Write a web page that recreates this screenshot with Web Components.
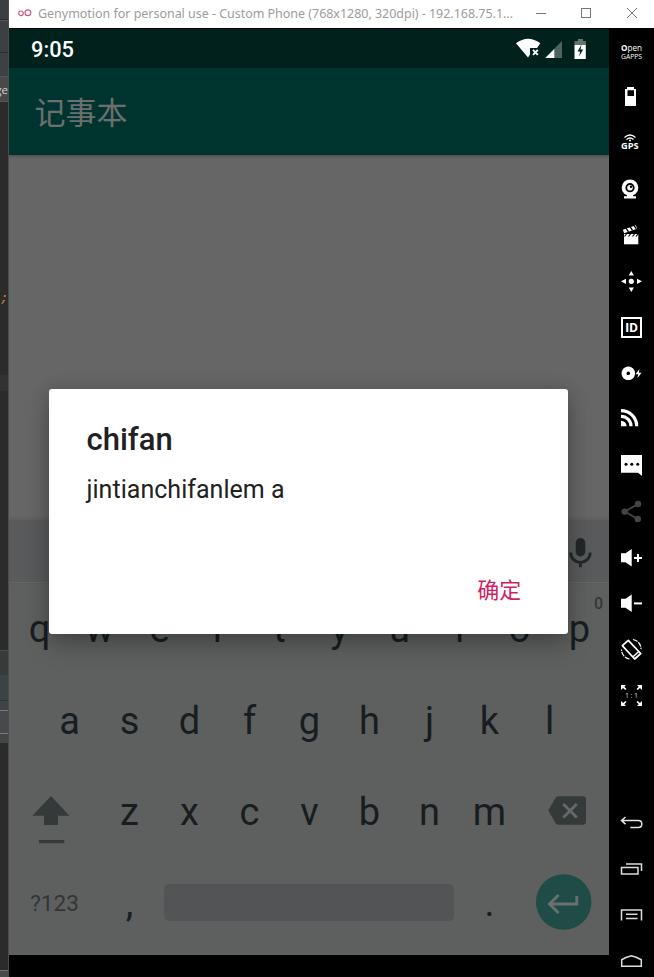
<!DOCTYPE html>
<html lang="zh">
<head>
<meta charset="utf-8">
<title>Genymotion</title>
<style>
html,body{margin:0;height:977px;overflow:hidden;background:#000}
</style>
</head>
<body>
<emulator-window></emulator-window>
<script>
function define(name, html, setup) {
  customElements.define(name, class extends HTMLElement {
    connectedCallback() {
      if (this.shadowRoot) return;
      const t = document.createElement('template');
      t.innerHTML = setup ? setup(this) : html;
      this.attachShadow({mode: 'open'}).append(t.content.cloneNode(true));
    }
  });
}

/* Strip of the code editor that shows behind the window */
define('editor-edge', `
<style>
:host{display:flex;flex-direction:column;box-sizing:border-box;width:9px;height:977px;overflow:hidden;border-right:1px solid #4b4c4d;
font-family:"Open Sans",sans-serif;
background:linear-gradient(#3c3f41 0 19px,#27292a 19px 20px,#55585a 20px 21px,#3c4043 21px 52px,#2e3032 52px 53px,#3e4144 53px 76px,#555 76px 77px,#47494a 77px 101px,#5a5a5a 101px 102px,#2b2b2b 102px 375px,#323232 375px 391px,#2b2b2b 391px 650px,#4a4b4c 650px 651px,#37393b 651px 675px,#3d4247 675px 700px,#303438 700px 701px,#404448 701px 710px,#777a7a 710px 711px,#474a4b 711px 733px,#777a7a 733px 734px,#434648 734px 743px,#2b2b2b 743px 970px,#707070 970px 971px,#47494a 971px)}
.tab{height:24px;margin-top:78px;line-height:24px;font-size:11.500px;color:#d0d0d0;display:flex;justify-content:flex-end}
.code{margin-top:187px;height:20px;font:italic bold 13px/20px "Liberation Mono",monospace;color:#c07832;display:flex;justify-content:flex-end}
</style>
<div class="tab">ge</div><div class="code">;</div>`);

define('title-bar', `
<style>
:host{display:flex;align-items:center;height:29px;box-sizing:border-box;background:#fff;padding:0 0 2px 9px;border-bottom:1px solid #000;font:12.5px "Noto Sans",sans-serif;color:#969696}
.logo{width:16px;height:16px;margin-right:4px;flex:none}
.t{width:476px;white-space:nowrap;flex:none}
.c{width:45px;height:27px;flex:none}
</style>
<svg class="logo" viewBox="0 0 16 16" fill="none" stroke="#d05a86" stroke-width="1.2"><circle cx="3" cy="8.3" r="2.3"/><circle cx="9.9" cy="7.8" r="2.9"/></svg>
<svg class="t" height="20"><text x="0" y="14.5" textLength="475" fill="#9c9c9c">Genymotion for personal use - Custom Phone (768x1280, 320dpi) - 192.168.75.1...</text></svg>
<svg class="c" viewBox="0 0 45 27" stroke="#777" fill="none"><path d="M22 13.5h10"/></svg>
<svg class="c" viewBox="0 0 45 27" stroke="#777" fill="none"><rect x="22.500" y="8.500" width="9" height="9"/></svg>
<svg class="c" viewBox="0 0 45 27" stroke="#777" fill="none"><path d="M23 8l10 10M33 8L23 18"/></svg>`);

define('status-bar', `
<style>
:host{display:flex;align-items:center;height:39px;box-sizing:border-box;background:#00211c;padding:2px 0 0 22px;color:#fff;font:500 21.800px/38px Roboto,sans-serif}
.time{flex:1}
svg{width:102px;height:38px}
</style>
<div class="time">9:05</div>
<svg viewBox="507 31 102 38" fill="#fff">
<path d="M516 43.200Q528 34.200 540.300 43.200L537 48H530V54.600L528 57.500Z"/>
<path d="M533 49.800l4.800 5M537.800 49.800l-4.800 5" stroke="#fff" stroke-width="1.900"/>
<path d="M562 41v17h-17z" fill="#4d6460"/><path d="M554.300 49v9h-9z"/>
<path d="M574.500 45v-4h3.500v-2h5v2h3v4z" fill="#60736f"/><path d="M574.500 45h11.300v14h-11.300z"/>
<path d="M581.500 44.500l-4 7h2.600l-1 5 4-7h-2.600z" fill="#00211c"/>
</svg>`);

define('app-bar', `
<style>
:host{display:flex;align-items:center;height:87px;box-sizing:border-box;padding:0 0 1px 25.500px;background:#00352f;color:#6b6f6e;font:31px/1.4 "Noto Sans CJK SC",sans-serif;box-shadow:0 1px 3px rgba(0,0,0,.3);position:relative}
</style><slot></slot>`);

define('key-cap', '', el => `
<style>
:host{display:flex;align-items:center;justify-content:center;width:60px;height:100%;box-sizing:border-box;padding:1.500px 0 0 1px;flex:none;font:38px/1 Roboto,sans-serif;color:#171d21;position:relative}
:host([small]){font-size:22.500px;color:#323637;width:90px}
.hint{position:absolute;top:11px;right:6px;font:500 16px/19px Roboto,sans-serif;color:#333738}
</style><slot></slot>${el.getAttribute('hint') ? `<span class="hint">${el.getAttribute('hint')}</span>` : ''}`);

define('soft-keyboard', '', () => {
  const keys = s => [...s].map(c => `<key-cap${c === 'p' ? ' hint="0"' : ''}>${c}</key-cap>`).join('');
  return `
<style>
:host{display:block;height:435px;background:#5e605f}
.suggest{height:63px;box-sizing:border-box;background:#595a5c;border-bottom:1px solid #646666;display:flex;justify-content:flex-end;box-shadow:0 -1px 3px rgba(80,80,85,.5)}
.row{height:91.300px;display:flex;justify-content:center;align-items:center}
svg{flex:none;display:block}
.space{width:290px;height:37px;border-radius:5px;background:#535456;margin:0 5px}
</style>
<div class="suggest"><svg width="57" height="62" viewBox="552 520 57 62"><rect x="575.700" y="538" width="9.600" height="18.500" rx="4.800" fill="#222829"/><path d="M570.600 552.500a9.800 9.800 0 0 0 19.600 0M580.400 562v5.300" fill="none" stroke="#222829" stroke-width="2.800"/></svg></div>
<div class="row">${keys('qwertyuiop')}</div>
<div class="row">${keys('asdfghjkl')}</div>
<div class="row">
<svg width="90" height="91" viewBox="9 766 90 91"><path d="M51 796l18.500 19.700H58V825H44v-9.300H32.300z" fill="#343a3a"/><path d="M39 841.600h25.300" stroke="#343a3a" stroke-width="3.200"/></svg>
${keys('zxcvbnm')}
<svg width="90" height="91" viewBox="519 766 90 91"><path d="M558 796.300h25q3 0 3 3v22.500q0 3-3 3h-25q-1.500 0-2.500-1.500l-7.200-12.700 7.200-12.800q1-1.500 2.500-1.500z" fill="#343a3a"/><path d="M563.300 804l13.500 13.500M576.800 804l-13.500 13.500" stroke="#666968" stroke-width="2.800"/></svg>
</div>
<div class="row">
<key-cap small>?123</key-cap><key-cap>,</key-cap><div class="space"></div><key-cap>.</key-cap>
<svg width="90" height="91" viewBox="519 857 90 91"><circle cx="563.700" cy="902" r="27.800" fill="#1f4c46"/><path d="M576.800 896v8H550M558.500 895l-9 9 9 9" fill="none" stroke="#69706e" stroke-width="2.900"/></svg>
</div>`;
});

define('alert-dialog', `
<style>
:host{display:flex;flex-direction:column;box-sizing:border-box;position:absolute;left:40px;top:359.500px;width:519.300px;height:245px;border-radius:3px;background:#fff;padding:33.500px 47px 28.500px 37.500px;font-family:Roboto,sans-serif;color:#212121;box-shadow:0 12px 24px rgba(0,0,0,.22),0 0 18px rgba(0,0,0,.16)}
h2{margin:0;font:500 31px/36px Roboto,sans-serif}
p{margin:17px 0 0;font-size:25px;line-height:30px;letter-spacing:.03px}
.act{margin-top:auto;align-self:flex-end;color:#d01f64;font:22px/34px "Noto Sans CJK SC",sans-serif}
</style>
<h2><slot name="title"></slot></h2><p><slot></slot></p><div class="act"><slot name="action"></slot></div>`);

define('phone-screen', `
<style>
:host{display:flex;flex-direction:column;position:relative;width:600px;height:948px;background:#000;overflow:hidden}
.body{height:365px;background:#666}
</style>
<status-bar></status-bar><app-bar>记事本</app-bar><div class="body"></div><soft-keyboard></soft-keyboard>
<alert-dialog><span slot="title">chifan</span>jintianchifanlem a<span slot="action">确定</span></alert-dialog>`);

const icons = {
  gapps: '<text x="12" y="22.500" font-size="8.500" textLength="21" lengthAdjust="spacingAndGlyphs"><tspan font-weight="700">O</tspan>pen</text><text x="12" y="30.500" font-size="6.500" textLength="21" lengthAdjust="spacingAndGlyphs">GAPPS</text>',
  battery: '<path fill-rule="evenodd" d="M18 13h7v2h2v17H16V15h2zM18.500 16.300v5.700H25v-5.700z"/>',
  gps: '<path d="M15.500 17.500q5.500-5 11 0M17.500 19.500q3.500-3 7 0" fill="none" stroke="#fff" stroke-width="1.300"/><circle cx="21" cy="20.500" r="1"/><text x="12" y="29.300" font-size="8" font-weight="700" textLength="17.500" lengthAdjust="spacingAndGlyphs">GPS</text>',
  camera: '<circle cx="21" cy="21.700" r="8.300"/><path d="M18 29h6v1.200h3V32.500H15v-2.300h3z"/><circle cx="21" cy="21.700" r="3.700" fill="none" stroke="#000" stroke-width="1.800"/><circle cx="22" cy="20.800" r="1.200" fill="#000"/>',
  clap: '<path d="M15 22h14.300v10.300H15z"/><path d="M14.500 19.500L27.500 15" stroke="#fff" stroke-width="3.500"/><path d="M17 16.200l2.500 3.600M21 14.700l2.500 3.600M25 13.400l2.300 3.400" stroke="#000" stroke-width="1.300"/><path d="M15.500 24.500l2-2.500M19.500 24.500l2-2.500M23.500 24.500l2-2.500M27 24.500l2-2.500" stroke="#000" stroke-width="1.200"/>',
  move: '<circle cx="22.300" cy="23.300" r="2.600"/><path d="M22.300 13l2.600 4.500h-5.200zM22.300 34l2.600-4.500h-5.200zM12 23.300l5-2.600v5.200zM33 23.300l-5-2.600v5.200z"/>',
  id: '<rect x="13" y="14" width="19" height="19" fill="none" stroke="#fff" stroke-width="2"/><text x="16.300" y="28.200" font-size="13" font-weight="700" textLength="12.500" lengthAdjust="spacingAndGlyphs" font-family="Roboto">ID</text>',
  disc: '<path fill-rule="evenodd" d="M19.300 16.500a6.800 6.800 0 1 0 .01 0zM19.300 21.500a1.800 1.800 0 1 1-.01 0z"/><path d="M30.500 19l-4 5.200h2.800l-1 4 4.300-5.500h-2.800z"/>',
  rss: '<path d="M12 14.600A15.700 15.700 0 0 1 27.700 30.300M12 20.300a10 10 0 0 1 10 10" fill="none" stroke="#fff" stroke-width="3.200"/><path d="M12 24.700a5.600 5.600 0 0 1 5.600 5.600H12z"/>',
  chat: '<path d="M12 13h21v21l-4-3.300H12z"/><g fill="#000"><circle cx="17" cy="22.300" r="1.500"/><circle cx="22.800" cy="22.300" r="1.500"/><circle cx="28.700" cy="22.300" r="1.500"/></g>',
  share: '<g fill="#454545"><circle cx="29" cy="16" r="3.200"/><circle cx="15.700" cy="23.600" r="3.200"/><circle cx="28.800" cy="31" r="3.200"/></g><path d="M29 16l-13.300 7.600L28.800 31" fill="none" stroke="#454545" stroke-width="1.800"/>',
  volup: '<path d="M12 19.300h4.500l6.200-4.300v17.500l-6.200-4.300H12z"/><path d="M25 24h8M29 20v8" stroke="#fff" stroke-width="2"/>',
  voldown: '<path d="M12 18.800h4.500l6.200-4.300V32l-6.200-4.300H12z"/><path d="M25 23.400h8" stroke="#fff" stroke-width="2"/>',
  rotate: '<g fill="none" stroke="#fff"><path d="M19.300 14.300L31.700 27.500l-6 5.500L13.300 19.700z" stroke-width="1.700" stroke-linejoin="round"/><path d="M23.800 31l6-5.500" stroke-width="1.400"/><path d="M24 13.500a9.500 9.500 0 0 1 8 9.500M20.500 33a9.500 9.500 0 0 1-8-9.500" stroke-width="1.200" stroke-dasharray="5 1"/></g>',
  full: '<path d="M12 13h5l-1.700 1.700 2.200 2.200-1.200 1.200-2.200-2.200L12 18zM33 13h-5l1.700 1.700-2.200 2.200 1.200 1.200 2.200-2.200L33 18zM12 34h5l-1.700-1.700 2.200-2.200-1.200-1.200-2.200 2.200L12 29zM33 34h-5l1.700-1.700-2.200-2.200 1.200-1.200 2.200 2.200L33 29z"/><text x="16" y="26.300" font-size="7" fill="#ddd" textLength="13">1:1</text>',
  back: '<path d="M13 21.400h16.300q3.500 0 3.500 3.500t-3.500 3.500h-8M16.500 18l-4 3.400 4 3.700" fill="none" stroke="#e4e4e4" stroke-width="1.500"/>',
  recent: '<path d="M12.500 22.500h16.500V29H12.500zM17 19h15.500v7" fill="none" stroke="#ddd" stroke-width="1.500"/>',
  menu: '<path d="M12.500 29.500V19h20v10.500M17 23.300h11.500M17 27.500h11.500" fill="none" stroke="#ddd" stroke-width="1.500"/>',
  home: '<path d="M12.700 29.300v-6.500L17 20.500l5.400-1.800 5.400 1.800 4.500 2.300v6.500z" fill="none" stroke="#ddd" stroke-width="1.500"/>'
};
define('tool-icon', '', el => `
<style>:host{display:block;height:46px;flex:none}svg{display:block;font-family:"Open Sans",sans-serif}</style>
<svg width="45" height="46" viewBox="0 0 45 46" fill="#fff">${icons[el.getAttribute('name')]}</svg>`);

define('tool-rail', '', () => {
  const list = n => n.map(i => `<tool-icon name="${i}"></tool-icon>`).join('');
  const n = Object.keys(icons);
  return `
<style>:host{display:flex;flex-direction:column;gap:81px;width:45px;height:949px;margin-top:-1px;background:#000;overflow:hidden;box-sizing:border-box}
nav{display:block}</style><nav>${list(n.slice(0, 15))}</nav><nav>${list(n.slice(15))}</nav>`;
});

define('emulator-window', `
<style>
:host{display:flex;width:654px;height:977px;overflow:hidden}
main{flex:1;min-width:0}
.r{display:flex;align-items:flex-start}
</style>
<editor-edge></editor-edge><main><title-bar></title-bar><div class="r"><phone-screen></phone-screen><tool-rail></tool-rail></div></main>`);
</script>
</body>
</html>
